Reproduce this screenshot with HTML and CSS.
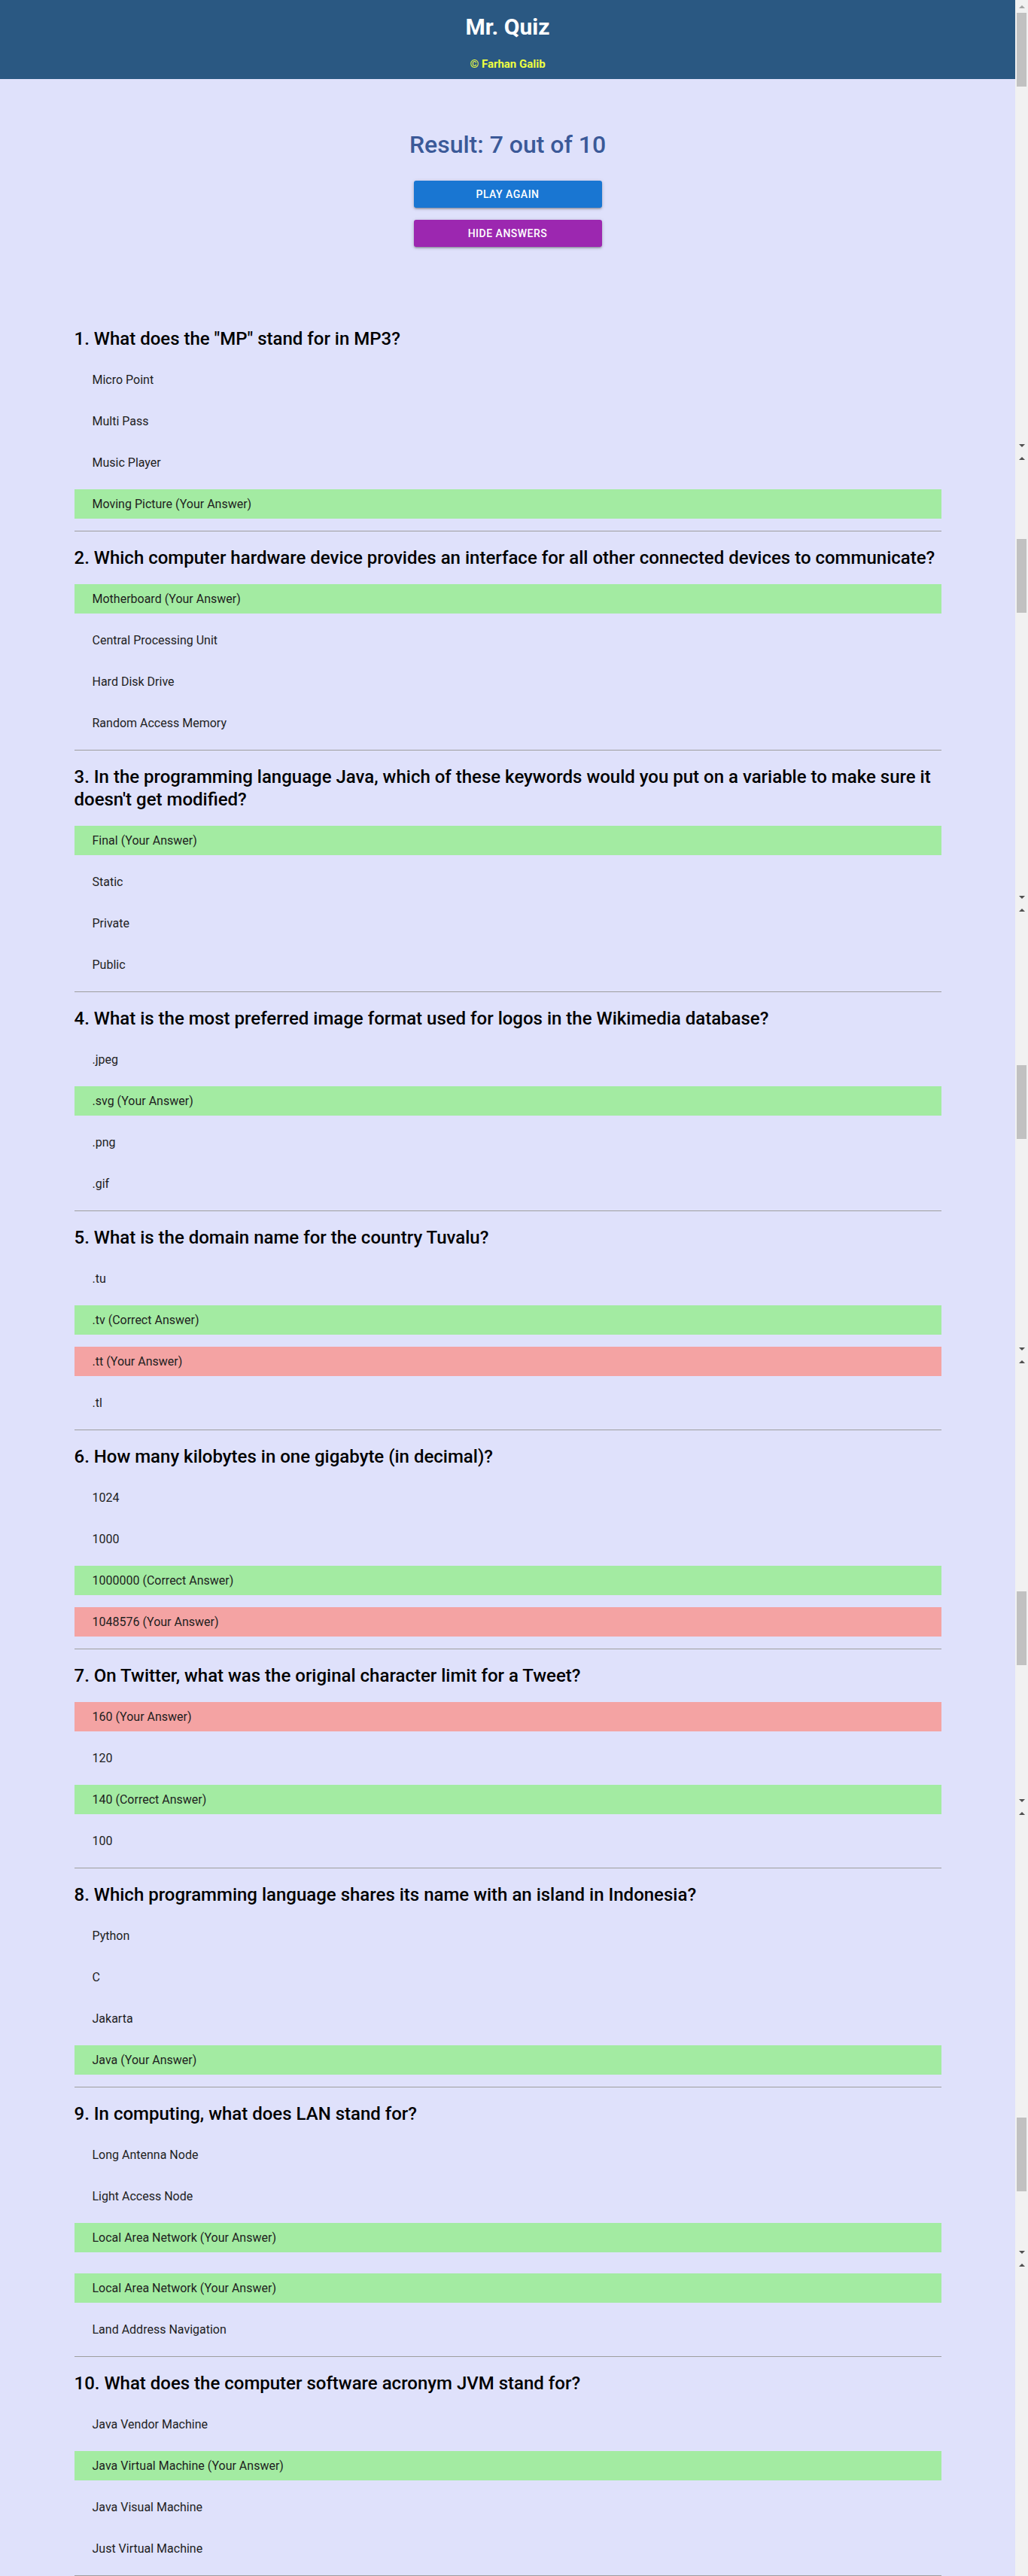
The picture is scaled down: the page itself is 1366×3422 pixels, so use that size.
FILE: index.html
```html
<!DOCTYPE html>
<html lang="en">
<head>
<meta charset="utf-8">
<title>Mr. Quiz</title>
<link rel="stylesheet" href="styles.css">
</head>
<body>
<div class="page">
  <main class="main">
    <header class="topbar">
      <h1 class="brand">Mr. Quiz</h1>
      <p class="credit">© Farhan Galib</p>
    </header>

    <section class="result">
      <h2 class="score">Result: 7 out of 10</h2>
      <div class="actions">
        <button class="btn btn-blue" type="button">Play Again</button>
        <button class="btn btn-purple" type="button">Hide Answers</button>
      </div>
    </section>

    <section class="quiz">
      <article class="question">
        <h3 class="q-title">1. What does the "MP" stand for in MP3?</h3>
        <ul class="answers">
          <li class="answer">Micro Point</li>
          <li class="answer">Multi Pass</li>
          <li class="answer">Music Player</li>
          <li class="answer right">Moving Picture (Your Answer)</li>
        </ul>
      </article>

      <article class="question">
        <h3 class="q-title">2. Which computer hardware device provides an interface for all other connected devices to communicate?</h3>
        <ul class="answers">
          <li class="answer right">Motherboard (Your Answer)</li>
          <li class="answer">Central Processing Unit</li>
          <li class="answer">Hard Disk Drive</li>
          <li class="answer">Random Access Memory</li>
        </ul>
      </article>

      <article class="question">
        <h3 class="q-title">3. In the programming language Java, which of these keywords would you put on a variable to make sure it doesn't get modified?</h3>
        <ul class="answers">
          <li class="answer right">Final (Your Answer)</li>
          <li class="answer">Static</li>
          <li class="answer">Private</li>
          <li class="answer">Public</li>
        </ul>
      </article>

      <article class="question">
        <h3 class="q-title">4. What is the most preferred image format used for logos in the Wikimedia database?</h3>
        <ul class="answers">
          <li class="answer">.jpeg</li>
          <li class="answer right">.svg (Your Answer)</li>
          <li class="answer">.png</li>
          <li class="answer">.gif</li>
        </ul>
      </article>

      <article class="question">
        <h3 class="q-title">5. What is the domain name for the country Tuvalu?</h3>
        <ul class="answers">
          <li class="answer">.tu</li>
          <li class="answer right">.tv (Correct Answer)</li>
          <li class="answer wrong">.tt (Your Answer)</li>
          <li class="answer">.tl</li>
        </ul>
      </article>

      <article class="question">
        <h3 class="q-title">6. How many kilobytes in one gigabyte (in decimal)?</h3>
        <ul class="answers">
          <li class="answer">1024</li>
          <li class="answer">1000</li>
          <li class="answer right">1000000 (Correct Answer)</li>
          <li class="answer wrong">1048576 (Your Answer)</li>
        </ul>
      </article>

      <article class="question">
        <h3 class="q-title">7. On Twitter, what was the original character limit for a Tweet?</h3>
        <ul class="answers">
          <li class="answer wrong">160 (Your Answer)</li>
          <li class="answer">120</li>
          <li class="answer right">140 (Correct Answer)</li>
          <li class="answer">100</li>
        </ul>
      </article>

      <article class="question">
        <h3 class="q-title">8. Which programming language shares its name with an island in Indonesia?</h3>
        <ul class="answers">
          <li class="answer">Python</li>
          <li class="answer">C</li>
          <li class="answer">Jakarta</li>
          <li class="answer right">Java (Your Answer)</li>
        </ul>
      </article>

      <article class="question">
        <h3 class="q-title">9. In computing, what does LAN stand for?</h3>
        <ul class="answers">
          <li class="answer">Long Antenna Node</li>
          <li class="answer">Light Access Node</li>
          <li class="answer right">Local Area Network (Your Answer)</li>
          <li class="answer right extra-gap">Local Area Network (Your Answer)</li>
          <li class="answer">Land Address Navigation</li>
        </ul>
      </article>

      <article class="question">
        <h3 class="q-title">10. What does the computer software acronym JVM stand for?</h3>
        <ul class="answers">
          <li class="answer">Java Vendor Machine</li>
          <li class="answer right">Java Virtual Machine (Your Answer)</li>
          <li class="answer">Java Visual Machine</li>
          <li class="answer">Just Virtual Machine</li>
        </ul>
      </article>
    </section>
  </main>

  <aside class="scrollbar" aria-hidden="true">
    <div class="sb-seg s0">
      <span class="sb-btn"><i class="tri up dim"></i></span>
      <span class="sb-track"><span class="sb-thumb"></span></span>
      <span class="sb-btn"><i class="tri down"></i></span>
    </div>
    <div class="sb-seg s1">
      <span class="sb-btn"><i class="tri up"></i></span>
      <span class="sb-track"><span class="sb-thumb"></span></span>
      <span class="sb-btn"><i class="tri down"></i></span>
    </div>
    <div class="sb-seg s2">
      <span class="sb-btn"><i class="tri up"></i></span>
      <span class="sb-track"><span class="sb-thumb"></span></span>
      <span class="sb-btn"><i class="tri down"></i></span>
    </div>
    <div class="sb-seg s3">
      <span class="sb-btn"><i class="tri up"></i></span>
      <span class="sb-track"><span class="sb-thumb"></span></span>
      <span class="sb-btn"><i class="tri down"></i></span>
    </div>
    <div class="sb-seg s4">
      <span class="sb-btn"><i class="tri up"></i></span>
      <span class="sb-track"><span class="sb-thumb"></span></span>
      <span class="sb-btn"><i class="tri down"></i></span>
    </div>
    <div class="sb-seg s5">
      <span class="sb-btn"><i class="tri up"></i></span>
      <span class="sb-track"><span class="sb-thumb"></span></span>
      <span class="sb-btn"><i class="tri down dim"></i></span>
    </div>
  </aside>
</div>
</body>
</html>
```

FILE: styles.css
```css
* {
  box-sizing: border-box;
}

html, body {
  margin: 0;
  padding: 0;
}

body {
  font-family: Roboto, "Liberation Sans", Arial, sans-serif;
  background: #dfe1fb;
  color: #111;
}

.page {
  display: flex;
  align-items: stretch;
}

.main {
  flex: 1 1 auto;
  min-width: 0;
}

/* Header */
.topbar {
  background: #2a5882;
  height: 105px;
  padding-top: 18px;
  text-align: center;
}

.brand {
  margin: 0;
  font-size: 30px;
  line-height: 36px;
  font-weight: 700;
  color: #ffffff;
}

.credit {
  margin: 21px 0 0;
  font-size: 15px;
  line-height: 20px;
  font-weight: 700;
  color: #eeff41;
}

/* Result */
.result {
  display: flex;
  flex-direction: column;
  align-items: center;
  padding-top: 67px;
}

.score {
  margin: 0;
  font-size: 32px;
  line-height: 40px;
  font-weight: 500;
  color: #3b5998;
}

.actions {
  margin-top: 28px;
  display: flex;
  flex-direction: column;
  gap: 16px;
}

.btn {
  width: 250px;
  height: 36px;
  border: none;
  border-radius: 3px;
  padding: 0 16px;
  font-family: Roboto, "Liberation Sans", Arial, sans-serif;
  font-size: 14px;
  font-weight: 500;
  letter-spacing: 0.5px;
  text-transform: uppercase;
  color: #ffffff;
  box-shadow: 0 2px 2px 0 rgba(0, 0, 0, 0.14), 0 3px 1px -2px rgba(0, 0, 0, 0.12), 0 1px 5px 0 rgba(0, 0, 0, 0.2);
  cursor: pointer;
}

.btn-blue {
  background: #1976d2;
}

.btn-purple {
  background: #9c27b0;
}

/* Quiz */
.quiz {
  width: 1152px;
  margin: 87px auto 0;
}

.question {
  padding: 20px 0 16px;
  border-bottom: 1px solid #9e9e9e;
}

.q-title {
  margin: 0;
  font-size: 24px;
  line-height: 30px;
  font-weight: 500;
  color: #000;
}

.answers {
  list-style: none;
  margin: 20px 0 0;
  padding: 0;
  display: flex;
  flex-direction: column;
  gap: 16px;
}

.answer {
  height: 39px;
  padding: 0 24px;
  display: flex;
  align-items: center;
  font-size: 16px;
  color: #1e1e1e;
}

.answer.right {
  background: #a3eba2;
}

.answer.wrong {
  background: #f4a3a3;
}

.answer.extra-gap {
  margin-top: 12px;
}

/* Scrollbar strip */
.scrollbar {
  flex: 0 0 17px;
  width: 17px;
  background: #f1f1f1;
  contain: size;
  overflow: hidden;
}

.sb-seg {
  height: 600px;
  display: flex;
  flex-direction: column;
}

.sb-btn {
  flex: 0 0 17px;
  height: 17px;
  display: flex;
  align-items: center;
  justify-content: center;
}

.sb-track {
  flex: 1 1 auto;
  display: block;
}

.sb-thumb {
  display: block;
  height: 98px;
  margin: 0 2px;
  background: #c1c1c1;
}

.s1 .sb-thumb { margin-top: 99px; }
.s2 .sb-thumb { margin-top: 198px; }
.s3 .sb-thumb { margin-top: 297px; }
.s4 .sb-thumb { margin-top: 396px; }
.s5 .sb-thumb { margin-top: 495px; }

.tri {
  display: block;
  width: 0;
  height: 0;
  border-left: 4px solid transparent;
  border-right: 4px solid transparent;
}

.tri.up {
  border-bottom: 4px solid #505050;
}

.tri.down {
  border-top: 4px solid #505050;
}

.tri.up.dim {
  border-bottom-color: #a3a3a3;
}

.tri.down.dim {
  border-top-color: #a3a3a3;
}
```
